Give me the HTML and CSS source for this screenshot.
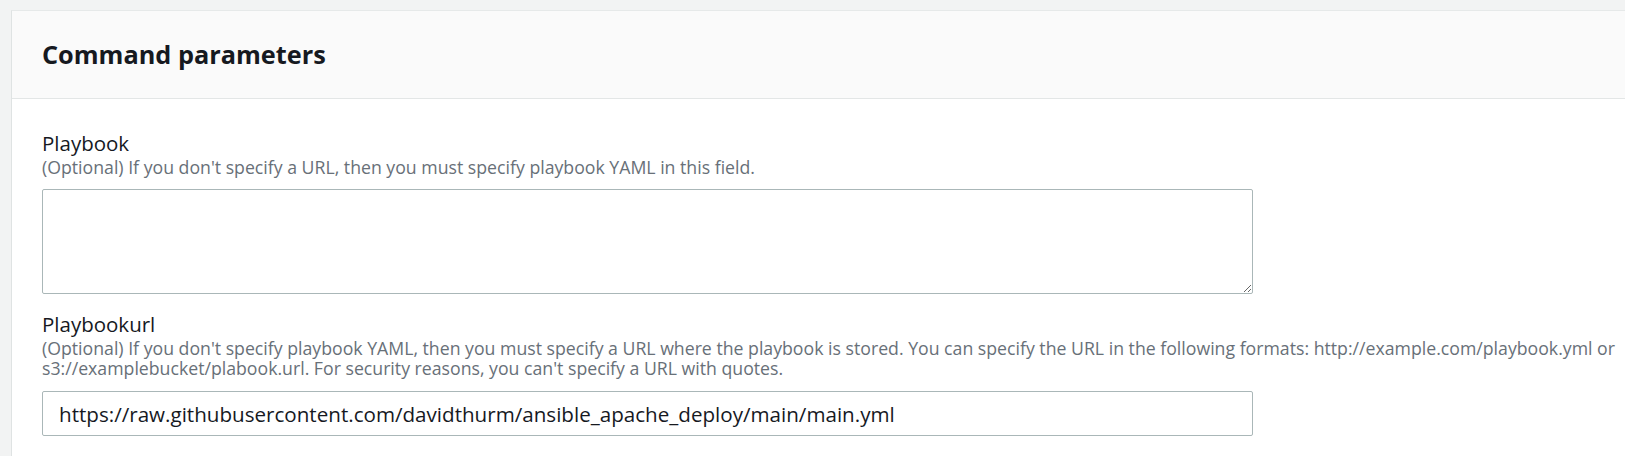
FILE: index.html
```html
<!DOCTYPE html>
<html lang="en">
<head>
<meta charset="utf-8">
<title>Command parameters</title>
<link rel="stylesheet" href="styles.css">
</head>
<body>
<section class="panel">
  <header class="panel-header">
    <h2 class="panel-title">Command parameters</h2>
  </header>
  <div class="panel-body">
    <div class="field field-first">
      <label class="field-label" for="playbook">Playbook</label>
      <p class="field-desc">(Optional) If you don't specify a URL, then you must specify playbook YAML in this field.</p>
      <textarea id="playbook" class="textarea"></textarea>
    </div>
    <div class="field field-second">
      <label class="field-label" for="playbookurl">Playbookurl</label>
      <p class="field-desc">(Optional) If you don't specify playbook YAML, then you must specify a URL where the playbook is stored. You can specify the URL in the following formats: http://example.com/playbook.yml or s3://examplebucket/plabook.url. For security reasons, you can't specify a URL with quotes.</p>
      <input id="playbookurl" class="input" type="text" value="https://raw.githubusercontent.com/davidthurm/ansible_apache_deploy/main/main.yml">
    </div>
  </div>
</section>
</body>
</html>
```
FILE: styles.css
```css
html, body {
  margin: 0;
  padding: 0;
}
body {
  background: #f2f3f3;
  font-family: "Open Sans", "Noto Sans", sans-serif;
  color: #16191f;
  padding: 10px 0 0 11px;
  overflow: hidden;
}
.panel {
  width: 1700px;
  background: #ffffff;
  border-top: 1px solid #e6e9e9;
  border-left: 1px solid #dfe3e3;
  min-height: 460px;
}
.panel-header {
  background: #fafafa;
  border-bottom: 1px solid #e3e6e6;
  height: 88px;
  box-sizing: border-box;
  padding: 28px 30px 0 30px;
}
.panel-title {
  margin: 0;
  font-size: 25.3px;
  line-height: 30px;
  font-weight: 700;
  color: #16191f;
}
.panel-body {
  padding: 33px 30px 0 30px;
}
.field {
  width: 1600px;
}
.field-second {
  margin-top: 19px;
}
.field-label {
  display: block;
  font-size: 20.5px;
  line-height: 22px;
  color: #16191f;
}
.field-desc {
  margin: 3px 0 12px 0;
  font-size: 17.7px;
  line-height: 20px;
  color: #687078;
}
.field-second .field-desc {
  margin-bottom: 13px;
}
.textarea {
  display: block;
  box-sizing: border-box;
  width: 1211px;
  height: 105px;
  border: 1px solid #aab7b8;
  border-radius: 2px;
  margin: 0;
  font-family: inherit;
}
.input {
  display: block;
  box-sizing: border-box;
  width: 1211px;
  height: 45px;
  border: 1px solid #aab7b8;
  border-radius: 2px;
  padding: 0 16px;
  margin: 0;
  font-family: inherit;
  font-size: 20.6px;
  color: #16191f;
}
```
